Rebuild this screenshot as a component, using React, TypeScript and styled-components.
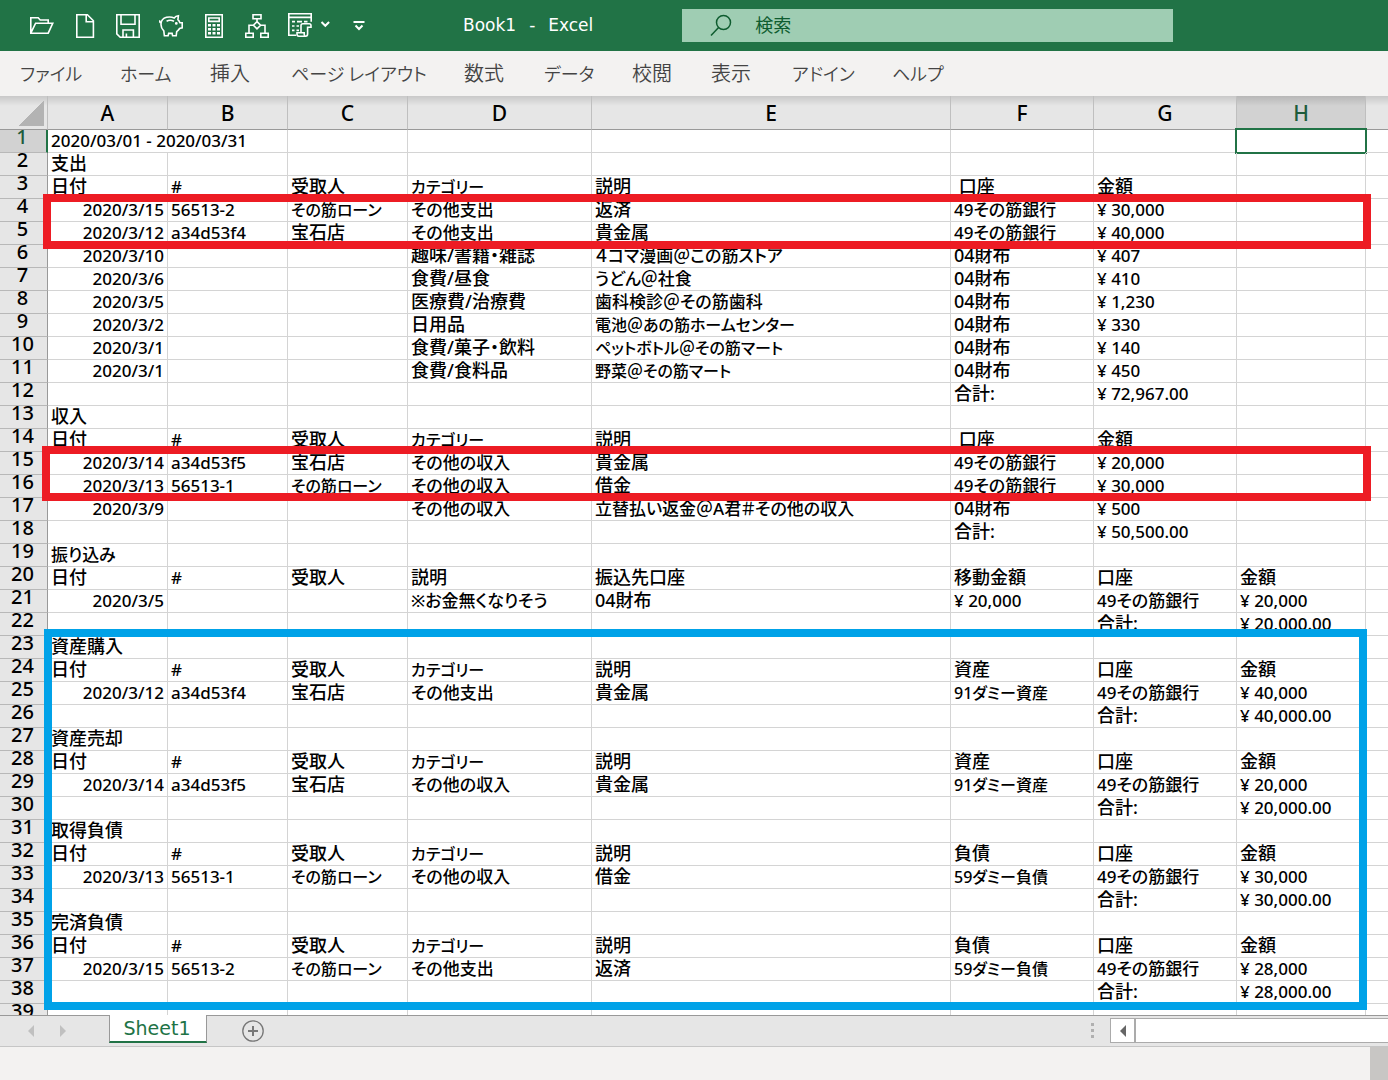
import React from "react";
import styled, { createGlobalStyle, css } from "styled-components";

const LATIN = `"Noto Sans", "Noto Sans CJK JP", sans-serif`;
const WIDE = `"DejaVu Sans", "Noto Sans CJK JP", sans-serif`;
const GREEN = "#217346";

const GlobalStyle = createGlobalStyle`
  *, *::before, *::after { box-sizing: border-box; }
  body { margin: 0; background: #f3f2f1; font-family: ${LATIN}; font-feature-settings: "palt" 1; }
  button, input { font: inherit; font-feature-settings: inherit; }
`;

const Window = styled.div`
  display: flex;
  flex-direction: column;
  height: 100vh;
  overflow: hidden;
`;

const TitleBar = styled.header`
  flex: none;
  display: flex;
  align-items: center;
  height: 51px;
  padding-left: 30px;
  background: ${GREEN};
  color: #fff;
`;

const QuickAccess = styled.div`
  display: flex;
  align-items: center;
  gap: 19px;
`;

const IconButton = styled.button<{ $width?: number }>`
  display: block;
  width: ${(p) => p.$width ?? 24}px;
  height: 26px;
  padding: 0;
  border: 0;
  background: none;
  color: inherit;

  svg {
    display: block;
    fill: none;
    stroke: currentColor;
    stroke-width: 1.6;
  }
`;

const SplitButton = styled.div`
  display: flex;
  gap: 8px;
`;

const BookTitle = styled.h1`
  display: flex;
  gap: 13px;
  margin: 0 0 2px 96px;
  font: 400 17px/24px ${WIDE};
`;

const SearchBox = styled.label`
  display: flex;
  align-items: center;
  gap: 23px;
  width: 491px;
  height: 33px;
  margin-left: 89px;
  padding-left: 28px;
  background: #9fcdb3;
  color: #0e5c2f;

  svg {
    flex: none;
    fill: none;
    stroke: currentColor;
    stroke-width: 1.5;
  }
`;

const SearchInput = styled.input`
  flex: 1;
  min-width: 0;
  padding: 0 0 2px;
  border: 0;
  outline: 0;
  background: none;
  color: inherit;
  font-size: 18px;
  line-height: 24px;

  &::placeholder {
    color: inherit;
    opacity: 1;
  }
`;

const Ribbon = styled.nav`
  flex: none;
  display: grid;
  grid-template-columns: 100px 90px 81px 173px 80px 88px 79px 81px 100px auto;
  align-items: center;
  height: 45px;
  padding: 0 0 2px 20px;
  background: #f3f2f1;
`;

const RibbonTab = styled.button<{ $kana: boolean }>`
  padding: 0;
  border: 0;
  background: none;
  color: #444;
  font-family: "Noto Sans CJK JP", sans-serif;
  font-size: ${(p) => (p.$kana ? 18 : 20)}px;
  font-weight: 350;
  line-height: 28px;
  text-align: left;
  white-space: nowrap;
`;

const Sheet = styled.main`
  position: relative;
  flex: 1;
  min-height: 0;
  overflow: hidden;
  background: #fff;
`;

const Grid = styled.table`
  width: 100%;
  table-layout: fixed;
  border-collapse: separate;
  border-spacing: 0;
  color: #000;

  th:last-child,
  td:last-child {
    border-right: 0;
  }
`;

const Col = styled.col<{ $width?: number }>`
  width: ${(p) => (p.$width ? `${p.$width}px` : "auto")};
`;

const headShade = (selected?: boolean) => css`
  background: linear-gradient(rgba(0, 0, 0, 0.13), transparent 10px) ${selected ? "#d2d2d2" : "#e6e6e6"};
`;

const ColumnHead = styled.th<{ $selected?: boolean }>`
  height: 34px;
  padding: 1px 0 0;
  border-right: 1px solid #bfbfbf;
  border-bottom: 1px solid #999;
  ${(p) => headShade(p.$selected)}
  color: ${(p) => (p.$selected ? "#1e5c3c" : "#000")};
  font-size: 21px;
  font-weight: 500;
  line-height: 32px;
`;

const Corner = styled.td`
  padding: 0 3px 3px 0;
  border-right: 1px solid #bfbfbf;
  border-bottom: 1px solid #999;
  vertical-align: bottom;
  ${headShade()}

  &::after {
    content: "";
    display: block;
    width: 25px;
    height: 25px;
    margin-left: auto;
    background: linear-gradient(to bottom right, transparent 50%, #b3b3b3 50%);
  }
`;

const RowHead = styled.th<{ $selected?: boolean }>`
  padding: 0;
  border-right: ${(p) => (p.$selected ? `2px solid ${GREEN}` : "1px solid #999")};
  border-bottom: 1px solid #b8b8b8;
  background: ${(p) => (p.$selected ? "#d2d2d2" : "#e6e6e6")};
  color: ${(p) => (p.$selected ? "#1e5c3c" : "#000")};
  font-size: 20px;
  font-weight: 500;
`;

const RowNumber = styled.div`
  height: 22px;
  padding-right: 2px;
  line-height: 13px;
  text-align: center;
`;

const Cell = styled.td<{ $active?: boolean }>`
  position: relative;
  padding: 0;
  border-right: 1px solid #d4d4d4;
  border-bottom: 1px solid #d4d4d4;

  ${(p) =>
    p.$active &&
    css`
      &::after {
        content: "";
        position: absolute;
        inset: -2px;
        border: 2px solid ${GREEN};
      }
    `}
`;

const CellText = styled.div<{ $right?: boolean; $size: number }>`
  height: 22px;
  padding: 0 3px;
  font-size: ${(p) => p.$size}px;
  font-weight: 500;
  line-height: ${(p) => (p.$size === 18 ? 20 : 22)}px;
  text-align: ${(p) => (p.$right ? "right" : "left")};
  white-space: pre;
`;

const Marker = styled.div<{ $color: string; $top: number; $height: number; $left: number; $width: number }>`
  position: absolute;
  top: ${(p) => p.$top}px;
  left: ${(p) => p.$left}px;
  width: ${(p) => p.$width}px;
  height: ${(p) => p.$height}px;
  border: 8px solid ${(p) => p.$color};
  pointer-events: none;
`;

const SheetBar = styled.footer`
  flex: none;
  display: flex;
  align-items: flex-start;
  height: 32px;
  border-top: 1px solid #999;
  border-bottom: 1px solid #c6c6c6;
  background: #e6e6e6;
`;

const TabArrows = styled.div`
  display: flex;
  gap: 20px;
  width: 109px;
  padding: 9px 0 0 26px;
`;

const ArrowButton = styled.button`
  width: 12px;
  height: 12px;
  padding: 0;
  border: 0;
  background: none;
  color: #c0c0c0;

  svg {
    display: block;
    fill: currentColor;
  }
`;

const SheetTab = styled.button`
  width: 98px;
  height: 28px;
  margin-top: -1px;
  padding: 1px 2px 0 0;
  border: solid #999;
  border-width: 0 1px;
  border-bottom: 2px solid ${GREEN};
  background: #fff;
  color: ${GREEN};
  font: 400 19px/25px ${WIDE};
`;

const AddSheet = styled.button`
  width: 22px;
  height: 22px;
  margin: 4px auto 0 35px;
  padding: 0;
  border: 0;
  background: none;
  color: #777;

  svg {
    display: block;
    fill: none;
    stroke: currentColor;
  }
`;

const Grip = styled.div`
  display: grid;
  gap: 3px;
  margin: 7px 16px 0 0;

  i {
    width: 3px;
    height: 3px;
    background: #b0b0b0;
  }
`;

const ScrollTrack = styled.div`
  width: 278px;
  height: 25px;
  margin-top: 2px;
  border: 1px solid #ababab;
  border-right: 0;
  background: #fff;
`;

const ScrollButton = styled(ArrowButton)`
  display: grid;
  place-items: center;
  width: 25px;
  height: 23px;
  border-right: 2px solid #ababab;
  color: #666;
`;

const StatusBar = styled.div`
  flex: none;
  display: flex;
  justify-content: flex-end;
  height: 33px;
  background: #f3f2f1;

  &::after {
    content: "";
    width: 18px;
    background: #c8c6c4;
  }
`;

type Row = Partial<Record<"A" | "B" | "C" | "D" | "E" | "F" | "G" | "H", string>>;

const COLUMNS = ["A", "B", "C", "D", "E", "F", "G", "H"] as const;
const WIDTHS = [48, 120, 120, 120, 184, 359, 143, 143, 129, undefined];

const flowHead: Row = { A: "日付", B: "#", C: "受取人", D: "カテゴリー", E: "説明", F: " 口座", G: "金額" };
const assetHead: Row = { A: "日付", B: "#", C: "受取人", D: "カテゴリー", E: "説明", F: "資産", G: "口座", H: "金額" };
const debtHead: Row = { ...assetHead, F: "負債" };

const ROWS: Row[] = [
  { A: "2020/03/01 - 2020/03/31" },
  { A: "支出" },
  flowHead,
  { A: "2020/3/15", B: "56513-2", C: "その筋ローン", D: "その他支出", E: "返済", F: "49その筋銀行", G: "¥ 30,000" },
  { A: "2020/3/12", B: "a34d53f4", C: "宝石店", D: "その他支出", E: "貴金属", F: "49その筋銀行", G: "¥ 40,000" },
  { A: "2020/3/10", D: "趣味/書籍・雑誌", E: "４コマ漫画＠この筋ストア", F: "04財布", G: "¥ 407" },
  { A: "2020/3/6", D: "食費/昼食", E: "うどん＠社食", F: "04財布", G: "¥ 410" },
  { A: "2020/3/5", D: "医療費/治療費", E: "歯科検診＠その筋歯科", F: "04財布", G: "¥ 1,230" },
  { A: "2020/3/2", D: "日用品", E: "電池＠あの筋ホームセンター", F: "04財布", G: "¥ 330" },
  { A: "2020/3/1", D: "食費/菓子・飲料", E: "ペットボトル＠その筋マート", F: "04財布", G: "¥ 140" },
  { A: "2020/3/1", D: "食費/食料品", E: "野菜＠その筋マート", F: "04財布", G: "¥ 450" },
  { F: "合計:", G: "¥ 72,967.00" },
  { A: "収入" },
  flowHead,
  { A: "2020/3/14", B: "a34d53f5", C: "宝石店", D: "その他の収入", E: "貴金属", F: "49その筋銀行", G: "¥ 20,000" },
  { A: "2020/3/13", B: "56513-1", C: "その筋ローン", D: "その他の収入", E: "借金", F: "49その筋銀行", G: "¥ 30,000" },
  { A: "2020/3/9", D: "その他の収入", E: "立替払い返金＠A君＃その他の収入", F: "04財布", G: "¥ 500" },
  { F: "合計:", G: "¥ 50,500.00" },
  { A: "振り込み" },
  { A: "日付", B: "#", C: "受取人", D: "説明", E: "振込先口座", F: "移動金額", G: "口座", H: "金額" },
  { A: "2020/3/5", D: "※お金無くなりそう", E: "04財布", F: "¥ 20,000", G: "49その筋銀行", H: "¥ 20,000" },
  { G: "合計:", H: "¥ 20,000.00" },
  { A: "資産購入" },
  assetHead,
  { A: "2020/3/12", B: "a34d53f4", C: "宝石店", D: "その他支出", E: "貴金属", F: "91ダミー資産", G: "49その筋銀行", H: "¥ 40,000" },
  { G: "合計:", H: "¥ 40,000.00" },
  { A: "資産売却" },
  assetHead,
  { A: "2020/3/14", B: "a34d53f5", C: "宝石店", D: "その他の収入", E: "貴金属", F: "91ダミー資産", G: "49その筋銀行", H: "¥ 20,000" },
  { G: "合計:", H: "¥ 20,000.00" },
  { A: "取得負債" },
  debtHead,
  { A: "2020/3/13", B: "56513-1", C: "その筋ローン", D: "その他の収入", E: "借金", F: "59ダミー負債", G: "49その筋銀行", H: "¥ 30,000" },
  { G: "合計:", H: "¥ 30,000.00" },
  { A: "完済負債" },
  debtHead,
  { A: "2020/3/15", B: "56513-2", C: "その筋ローン", D: "その他支出", E: "返済", F: "59ダミー負債", G: "49その筋銀行", H: "¥ 28,000" },
  { G: "合計:", H: "¥ 28,000.00" },
  {},
];

const isDate = (text: string) => /^\d{4}\/\d+\/\d+$/.test(text);
const hasKana = (text: string) => /[\u3041-\u3096\u30a1-\u30fa]/.test(text);

const textSize = (text: string) => {
  if (text.includes("ー")) return 16;
  if (hasKana(text)) return 17;
  return /^[\x20-\x7e¥]*$/.test(text) ? 17 : 18;
};

const TOOLS: { label: string; art: React.ReactNode }[] = [
  {
    label: "開く",
    art: <path d="M.8 20.2V4.8h7.4l2 2.2h8v3.2M.8 20.2l4.8-10h17.2l-4.6 10z" />,
  },
  {
    label: "新規作成",
    art: <path d="M3.8 1.8h10.6l6 6v16.4H3.8zM13.2 1.8v7h7.2" />,
  },
  {
    label: "上書き保存",
    art: <path d="M.8 1.8h22.4v22.4H4.2L.8 20.8zM5 1.8v9.4h14V1.8M7 24v-7h10.4v7M10.4 20.4v3.6" />,
  },
  {
    label: "貯金箱",
    art: (
      <>
        <path d="M2.4 8.6C3.4 5.6 6.6 4 10.6 4c1.8 0 3.2.3 4.6.9 1-1.3 2.4-2 4.2-2.2l-.5 4c1 .9 1.6 1.9 2 3h2.3v5.1l-2.6.7c-.8 1.4-1.7 2.3-2.9 3.1l-.5 4.2h-3.6l-.5-2.4H9.7l-.6 2.4H5.4l-.6-5C3 16.1 2 14 2 11.8c0-1.2.1-2.2.4-3.2zM2.4 10C1 9.8.4 8.8.6 7.2" />
        <path d="M7.6 8.2c2.3-1.2 4.9-1.2 7.4.1" />
        <circle cx="17.3" cy="10.4" r=".6" fill="currentColor" />
      </>
    ),
  },
  {
    label: "計算",
    art: (
      <>
        <path d="M3.8 1.8h16.4v22.4H3.8zM6.8 5h10.4v3.4H6.8z" />
        <path d="M6 12.2h3M10.5 12.2h3M15 12.2h3M6 16.2h3M10.5 16.2h3M15 16.2h3M6 20.2h3M10.5 20.2h3M15 20.2h3" strokeWidth="2.6" />
      </>
    ),
  },
  {
    label: "組織図",
    art: (
      <path d="M8 1.8h8v4H8zM12 5.8v3M12 8.6l3.6 3.6-3.6 3.6-3.6-3.6zM8.4 12.2H4v8M15.6 12.2H20v8M.8 20.2h7.4v4H.8zM15.8 20.2h7.4v4h-7.4z" />
    ),
  },
];

const FormScriptIcon = () => (
  <svg width="24" height="26" viewBox="0 0 24 26">
    <path d="M8 22.2H.8V.8h22.4v8M.8 4.4h22.4" />
    <path d="M4 8.6h3M9 8.6h5M16 8.6h3.5M4 13h2.5M8.5 13h2.5M4 17.4h2.5M8.5 17.4h2.5" />
    <path d="M13 19.8v-7.3c0-1.2.8-1.8 1.8-1.8h6.4c1.2 0 1.8.7 1.8 1.8v1.7h-3.4v6.8c0 1.4-.8 2.2-2 2.2h-6.8c-1.2 0-1.8-.7-1.8-1.9v-1.5h7.2v1.5c0 1 .3 1.7 1.2 1.9" />
  </svg>
);

export default function App() {
  return (
    <Window>
      <GlobalStyle />
      <TitleBar>
        <QuickAccess>
          {TOOLS.map((tool) => (
            <IconButton key={tool.label} aria-label={tool.label}>
              <svg width="24" height="26" viewBox="0 0 24 26">
                {tool.art}
              </svg>
            </IconButton>
          ))}
          <SplitButton>
            <IconButton aria-label="フォーム">
              <FormScriptIcon />
            </IconButton>
            <IconButton $width={12} aria-label="フォームのオプション">
              <svg width="12" height="26" viewBox="0 0 12 26">
                <path d="M1.5 9l3.8 3.8L9.1 9" strokeWidth="2" />
              </svg>
            </IconButton>
          </SplitButton>
          <IconButton $width={16} aria-label="クイック アクセスのカスタマイズ">
            <svg width="16" height="26" viewBox="0 0 16 26">
              <path d="M2.5 9h11M4.500 12.5L8 16l3.5-3.5" strokeWidth="2" />
            </svg>
          </IconButton>
        </QuickAccess>
        <BookTitle>
          <span>Book1</span>
          <span>-</span>
          <span>Excel</span>
        </BookTitle>
        <SearchBox>
          <svg width="22" height="24" viewBox="0 0 22 24" aria-hidden="true">
            <circle cx="13.5" cy="8.5" r="7" />
            <path d="M8.6 13.5L1 21.5" />
          </svg>
          <SearchInput type="text" placeholder="検索" aria-label="検索" />
        </SearchBox>
      </TitleBar>

      <Ribbon>
        {["ファイル", "ホーム", "挿入", "ページ レイアウト", "数式", "データ", "校閲", "表示", "アドイン", "ヘルプ"].map((name) => (
          <RibbonTab key={name} $kana={hasKana(name)}>
            {name}
          </RibbonTab>
        ))}
      </Ribbon>

      <Sheet>
        <Grid>
          <colgroup>
            {WIDTHS.map((width, i) => (
              <Col key={i} $width={width} />
            ))}
          </colgroup>
          <thead>
            <tr>
              <Corner />
              {COLUMNS.map((name) => (
                <ColumnHead key={name} scope="col" $selected={name === "H"}>
                  {name}
                </ColumnHead>
              ))}
              <ColumnHead />
            </tr>
          </thead>
          <tbody>
            {ROWS.map((row, index) => (
              <tr key={index}>
                <RowHead scope="row" $selected={index === 0}>
                  <RowNumber>{index + 1}</RowNumber>
                </RowHead>
                {COLUMNS.map((name) => {
                  if (index === 0 && name === "B") return null;
                  const text = row[name] ?? "";
                  return (
                    <Cell key={name} colSpan={index === 0 && name === "A" ? 2 : 1} $active={index === 0 && name === "H"}>
                      <CellText $right={isDate(text)} $size={textSize(text)}>
                        {text}
                      </CellText>
                    </Cell>
                  );
                })}
                <Cell />
              </tr>
            ))}
          </tbody>
        </Grid>
        <Marker $color="#ed1c24" $top={98} $height={55} $left={43} $width={1328} />
        <Marker $color="#ed1c24" $top={350} $height={55} $left={42} $width={1329} />
        <Marker $color="#00a2e8" $top={533} $height={381} $left={44} $width={1323} />
      </Sheet>

      <SheetBar>
        <TabArrows>
          <ArrowButton aria-label="前のシート">
            <svg width="12" height="12" viewBox="0 0 12 12">
              <path d="M8 0v12L2 6z" />
            </svg>
          </ArrowButton>
          <ArrowButton aria-label="次のシート">
            <svg width="12" height="12" viewBox="0 0 12 12">
              <path d="M2 0v12l6-6z" />
            </svg>
          </ArrowButton>
        </TabArrows>
        <SheetTab>Sheet1</SheetTab>
        <AddSheet aria-label="新しいシート">
          <svg width="22" height="22" viewBox="0 0 22 22">
            <circle cx="11" cy="11" r="10.2" strokeWidth="1.3" />
            <path d="M11 6v10M6 11h10" strokeWidth="2" />
          </svg>
        </AddSheet>
        <Grip>
          <i />
          <i />
          <i />
        </Grip>
        <ScrollTrack>
          <ScrollButton aria-label="左へスクロール">
            <svg width="6" height="12" viewBox="0 0 6 12">
              <path d="M6 0v12L0 6z" />
            </svg>
          </ScrollButton>
        </ScrollTrack>
      </SheetBar>
      <StatusBar />
    </Window>
  );
}
